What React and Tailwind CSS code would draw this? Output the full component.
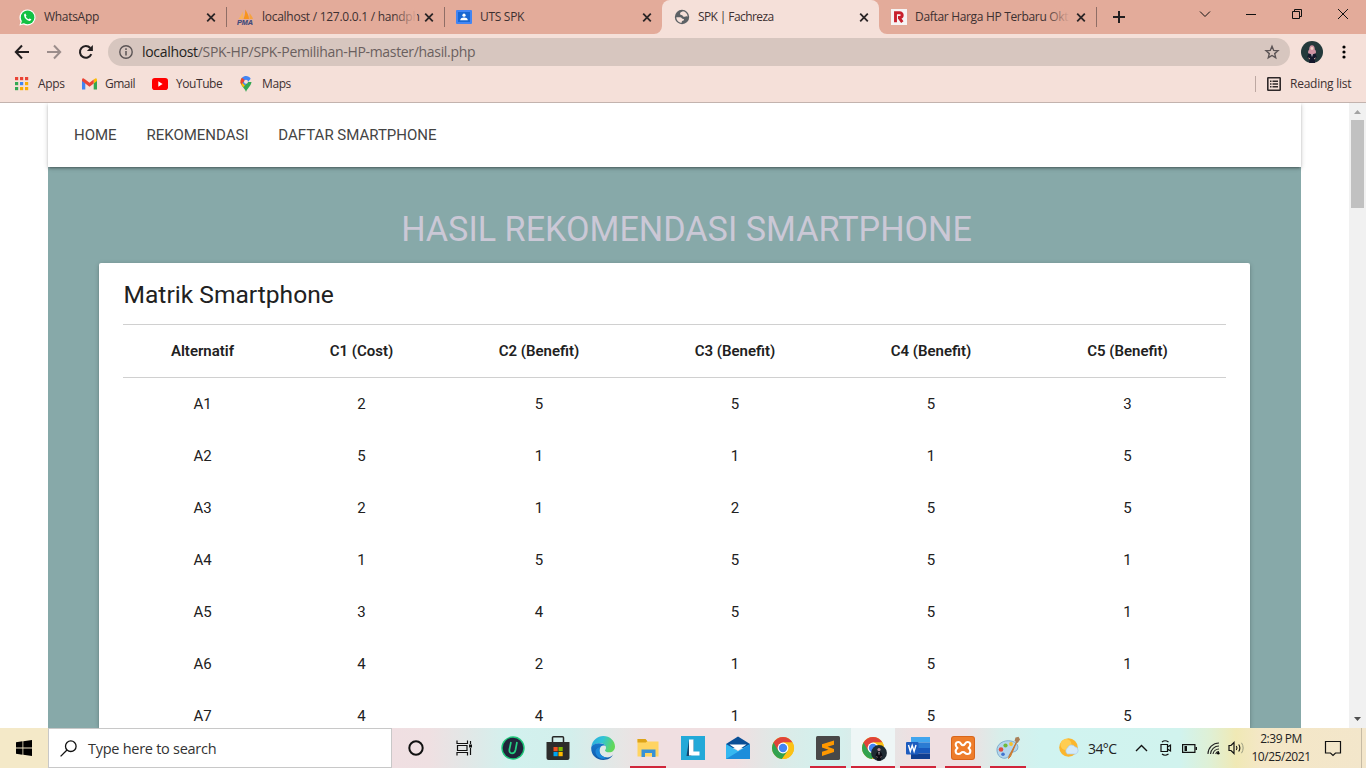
import React from "react";

const ui = "font-['Open_Sans','Noto_Sans',sans-serif]";

function CloseX() {
  return (
    <svg width="16" height="16" viewBox="0 0 16 16" className="shrink-0">
      <path d="M4.2 4.7 L11.8 12.3 M11.8 4.7 L4.2 12.3" stroke="#2b2526" strokeWidth="1.8" fill="none" />
    </svg>
  );
}

function Tab({ icon, title, fade, sep, active, tracking, width = "w-[218px]" }) {
  return (
    <div className={"relative flex h-[34px] shrink-0 items-center pl-[11px] pr-[7px] " + width + (active ? " rounded-t-lg bg-[#f5e0d9]" : "")}>
      {active && (
        <>
          <svg className="absolute -left-2 bottom-0" width="8" height="8"><path d="M8 0 V8 H0 A8 8 0 0 0 8 0Z" fill="#f5e0d9" /></svg>
          <svg className="absolute -right-2 bottom-0" width="8" height="8"><path d="M0 0 V8 H8 A8 8 0 0 1 0 0Z" fill="#f5e0d9" /></svg>
        </>
      )}
      <div className="flex w-[17px] shrink-0 justify-center">{icon}</div>
      <div className="relative ml-2 w-[155px]">
        <div className={"whitespace-nowrap text-[12px] leading-[18px] text-[#3d3031] " + tracking}>{title}</div>
        {fade && <div className="absolute right-0 top-0 h-full w-6 bg-gradient-to-r from-transparent to-[#e3ab9a]" />}
      </div>
      <div className="ml-auto"><CloseX /></div>
      {sep && <div className="absolute right-[-1px] top-[7px] h-5 w-px bg-[#8f6e66]" />}
    </div>
  );
}

const WhatsAppIcon = (
  <svg width="17" height="17" viewBox="0 0 17 17">
    <path d="M8.6 .4a8 8 0 1 1-4 15L.4 16.6 1.7 12.6A8 8 0 0 1 8.6 .4Z" fill="#fff" />
    <circle cx="8.6" cy="8.4" r="6.8" fill="#12c143" />
    <path d="M2 15 L3 11.5 L5.5 14Z" fill="#12c143" />
    <path d="M6.4 4.6c-.8 0-1.4.8-1.3 1.8.3 2.6 2.6 5 5.2 5.5 1.2.1 2-.7 2-1.6l-1.8-.9-.9.9c-1.3-.5-2.2-1.4-2.8-2.7l.7-.9z" fill="#fff" />
  </svg>
);
const PmaIcon = (
  <svg width="17" height="16" viewBox="0 0 17 16">
    <path d="M1.5 10 C3 8 5 5 5.5 2.5 C6.5 5 6.5 8 6 10Z" fill="#f9b25c" />
    <path d="M6.5 10 C8 6 8.5 3 8 .5 C10 3 12 7 12 10Z" fill="#f8941e" />
    <path d="M12.5 10 L12.5 4 C14 6 15.5 8 16 10Z" fill="#f6a23f" />
    <text x="0" y="15.6" fontFamily="Liberation Sans" fontWeight="bold" fontStyle="italic" fontSize="6.6" textLength="16" lengthAdjust="spacingAndGlyphs" fill="#3e4a7d" stroke="#3e4a7d" strokeWidth=".15">PMA</text>
  </svg>
);
const ClassroomIcon = (
  <svg width="16" height="16" viewBox="0 0 16 16">
    <rect y="1" width="16" height="14" rx="1" fill="#4285f4" />
    <rect x="2" y="3" width="12" height="10" fill="#1967d2" />
    <circle cx="8" cy="6.2" r="1.6" fill="#fff" />
    <path d="M4.2 11.2c0-2 2-2.7 3.8-2.7s3.8.7 3.8 2.7z" fill="#fff" />
  </svg>
);
const GlobeIcon = (
  <svg width="16" height="16" viewBox="0 0 16 16">
    <circle cx="8" cy="8" r="7.2" fill="#5c6165" />
    <path d="M2.300 8.200h3.800c1.700 0 1.700 1.800 3.400 1.800.9 0 .6 1.800-.7 1.800-1 0-1 1.200-1.100 2C4.500 13.600 2.300 11 2.300 8.200zM9 2.300c-1.500.8-3.300 1-2.900 2.900.3 1 2.200.5 2.600 1.600.3 1.300 2 1.300 3 .6.6-.5 1.500-.2 2 .2C13.500 4.800 11.500 2.700 9 2.300z" fill="#f5e0d9" />
  </svg>
);
const RIcon = (
  <svg width="16" height="16" viewBox="0 0 16 16">
    <rect width="16" height="16" fill="#f6f4f4" />
    <path d="M4.500 13.300 V3.700 H8.500 C12.300 3.700 12 8.500 8.500 8.500 H7 M8 8.500 L11.300 13.200" fill="none" stroke="#c8202c" strokeWidth="2.900" />
  </svg>
);

function AppsIcon() {
  const c = ["#ea4335", "#ea4335", "#ea4335", "#34a853", "#4285f4", "#fbad05", "#34a853", "#fbad05", "#fbad05"];
  return (
    <svg width="14" height="14" viewBox="0 0 14 14">
      {c.map((f, i) => <rect key={i} x={(i % 3) * 5} y={Math.floor(i / 3) * 5} width="3.200" height="3.200" fill={f} />)}
    </svg>
  );
}

function Bookmark({ icon, label, cls }) {
  return (
    <div className="flex items-center">
      <div className="flex w-4 justify-center">{icon}</div>
      <div className={"ml-2 whitespace-nowrap text-[12px] leading-4 text-[#3d3031] " + cls}>{label}</div>
    </div>
  );
}

function Browser() {
  return (
    <div className={ui + " flex h-[103px] flex-col border-b border-[#c3b3ae] bg-[#f5e0d9]"}>
      <div className="flex h-[34px] shrink-0 bg-[#e3ab9a] pl-2">
        <Tab icon={WhatsAppIcon} title="WhatsApp" sep tracking="tracking-[-0.3px]" />
        <Tab icon={PmaIcon} title="localhost / 127.0.0.1 / handph" fade sep tracking="tracking-[-0.27px]" />
        <Tab icon={ClassroomIcon} title="UTS SPK" tracking="tracking-[-0.3px]" />
        <Tab icon={GlobeIcon} title="SPK | Fachreza" active width="w-[217px]" tracking="tracking-[-0.6px]" />
        <Tab icon={RIcon} title="Daftar Harga HP Terbaru Okt" fade sep width="w-[217px]" tracking="tracking-[-0.32px]" />
        <div className="flex w-[46px] items-center justify-center">
          <svg width="14" height="14" viewBox="0 0 14 14"><path d="M7 1V13M1 7H13" stroke="#231f20" strokeWidth="2" /></svg>
        </div>
        <div className="ml-auto flex h-7 items-center">
          <div className="flex w-[46px] justify-center"><svg width="12" height="12"><path d="M1 3.500 L6 8.500 L11 3.500" fill="none" stroke="#111" /></svg></div>
          <div className="flex w-[46px] justify-center"><svg width="12" height="12"><path d="M1 6.500H11" stroke="#111" /></svg></div>
          <div className="flex w-[46px] justify-center"><svg width="12" height="12"><path d="M1.500 3.500h7v7h-7zM3.500 3.500v-2h7v7h-2" fill="none" stroke="#111" /></svg></div>
          <div className="flex w-[46px] justify-center"><svg width="12" height="12"><path d="M1 1L11 11M11 1L1 11" stroke="#111" /></svg></div>
        </div>
      </div>
      <div className="flex h-9 shrink-0 items-center pl-[14px]">
        <svg width="16" height="16" viewBox="0 0 16 16"><path d="M15 8H2M8 1.500L1.800 8L8 14.500" fill="none" stroke="#231f20" strokeWidth="2" /></svg>
        <svg className="ml-4" width="16" height="16" viewBox="0 0 16 16"><path d="M1 8H14M8 1.500L14.200 8L8 14.500" fill="none" stroke="#9b8d8b" strokeWidth="2" /></svg>
        <svg className="ml-4" width="16" height="16" viewBox="0 0 16 16"><path d="M13.300 10.200A5.900 5.900 0 1 1 12.300 4" fill="none" stroke="#231f20" strokeWidth="2.100" /><path d="M14.900 1V7H8.900Z" fill="#231f20" /></svg>
        <div className="ml-[14px] flex h-7 w-[1182px] items-center rounded-full bg-[#d7c6bf] pl-[11px] pr-[10px]">
          <svg width="14" height="14" viewBox="0 0 14 14"><circle cx="7" cy="7" r="6.200" fill="none" stroke="#5b5455" strokeWidth="1.400" /><path d="M7 6V10.500M7 3.300V5" stroke="#5b5455" strokeWidth="1.500" /></svg>
          <div className="ml-[9px] whitespace-nowrap text-[14px] leading-5 tracking-[-0.32px] text-[#6a5f5e]"><span className="text-[#231f20]">localhost</span>/SPK-HP/SPK-Pemilihan-HP-master/hasil.php</div>
          <svg className="ml-auto" width="16" height="16" viewBox="0 0 16 16"><path d="M8 2.300L9.700 6.400L14 6.700L10.700 9.600L11.700 13.700L8 11.500L4.300 13.700L5.300 9.600L2 6.700L6.300 6.400Z" fill="none" stroke="#5b5455" strokeWidth="1.400" /></svg>
        </div>
        <svg className="ml-[11px]" width="22" height="22" viewBox="0 0 22 22">
          <circle cx="11" cy="11" r="11" fill="#23393b" />
          <path d="M7.800 12H14.200L15.800 16L14 18.500V22H8.200V18.500L6.200 16Z" fill="#14182c" />
          <path d="M11 4.300C13 4.300 13.800 6 13.800 8.500C15 9.500 15.200 11 14.800 12.300L11 13.500L7.200 12.300C6.800 11 7.300 9.500 8.200 8.500C8.200 6 9 4.300 11 4.300Z" fill="#cf94a4" />
          <circle cx="11" cy="7.500" r="1.400" fill="#f0d2c4" />
          <path d="M10.300 13H11.700L11.300 15.500H10.700Z" fill="#d8cfd8" />
          <path d="M7.500 17L9 18M14.500 17L13 18" stroke="#d9b0a0" strokeWidth="1" />
        </svg>
        <svg className="ml-5 -translate-x-px" width="4" height="14" viewBox="0 0 4 14"><circle cx="2" cy="2" r="1.600" /><circle cx="2" cy="7" r="1.600" /><circle cx="2" cy="12" r="1.600" /></svg>
      </div>
      <div className="flex h-7 items-center pl-[14px] pr-[14px]">
        <Bookmark cls="w-[43px] tracking-[-0.3px]" label="Apps" icon={<AppsIcon />} />
        <Bookmark cls="w-[47px] tracking-[-0.5px]" label="Gmail" icon={
          <svg width="15" height="12" viewBox="0 0 15 12"><path d="M0 2V11.500H3.300V5Z" fill="#4285f4" /><path d="M15 2V11.500H11.700V5Z" fill="#34a853" /><path d="M11.700 1.500V5.500L15 3V1.700Q14.500 -.500 12.500 .900Z" fill="#fbbc04" /><path d="M3.300 1.500L7.500 4.700L11.700 1.500V5.500L7.500 8.700L3.300 5.500L0 3V1.700Q.500 -.500 2.500 .900Z" fill="#ea4335" /></svg>} />
        <Bookmark cls="w-[62px] tracking-[-0.43px]" label="YouTube" icon={
          <svg width="16" height="12" viewBox="0 0 16 12"><rect width="16" height="12" rx="2.800" fill="#f00" /><path d="M6.300 3.300L10.600 6L6.300 8.700Z" fill="#fff" /></svg>} />
        <Bookmark cls="tracking-[-0.4px]" label="Maps" icon={
          <svg width="12" height="16" viewBox="0 0 12 16">
            <path d="M6 16C5.500 13 1 10.500 .500 6H11.500C11 10.500 6.500 13 6 16Z" fill="#34a853" />
            <path d="M.500 6C.400 4 1 2.600 2 1.700L7.500 6.300L3.300 11.300C1.800 9.500 .600 8 .500 6Z" fill="#fbbc04" />
            <path d="M2 1.700C4.500-.800 9-.500 10.700 2.700L5 9.500L.700 5Z" fill="#4285f4" />
            <path d="M2 1.700L5 4.200L1.200 8.500C.100 6 .400 3.500 2 1.700Z" fill="#ea4335" />
            <circle cx="6" cy="5.700" r="2" fill="#f5e0d9" />
          </svg>} />
        <div className="ml-auto h-4 w-px bg-[#bda8a2]" />
        <svg className="ml-[11px]" width="14" height="14" viewBox="0 0 14 14"><rect x=".800" y=".800" width="12.400" height="12.400" rx=".500" fill="none" stroke="#2e2829" strokeWidth="1.600" /><path d="M3 4.300H4.500M3 7H4.500M3 9.700H4.500M5.500 4.300H11M5.500 7H11M5.500 9.700H11" stroke="#2e2829" strokeWidth="1.500" /></svg>
        <div className="ml-[9px] w-[62px] whitespace-nowrap text-[12px] tracking-[-0.25px] text-[#3d3031]">Reading list</div>
      </div>
    </div>
  );
}

const rows = [
  ["A1", 2, 5, 5, 5, 3],
  ["A2", 5, 1, 1, 1, 5],
  ["A3", 2, 1, 2, 5, 5],
  ["A4", 1, 5, 5, 5, 1],
  ["A5", 3, 4, 5, 5, 1],
  ["A6", 4, 2, 1, 5, 1],
  ["A7", 4, 4, 1, 5, 5],
];
const heads = ["Alternatif", "C1 (Cost)", "C2 (Benefit)", "C3 (Benefit)", "C4 (Benefit)", "C5 (Benefit)"];
const grid = "grid grid-cols-[159px_159px_196px_196px_196px_197px] items-center text-center";

function Page() {
  return (
    <div className="flex h-[625px] bg-white font-[Roboto,sans-serif] text-[#212121]">
      <div className="flex-1 overflow-hidden pl-12 pr-12">
        <div className="relative flex h-16 items-center gap-[29.800px] bg-white pl-[26px] text-[15px] text-[#444] shadow-[0_2px_2px_0_rgba(0,0,0,0.14),0_3px_1px_-2px_rgba(0,0,0,0.12),0_1px_5px_0_rgba(0,0,0,0.2)]">
          <span>HOME</span>
          <span>REKOMENDASI</span>
          <span>DAFTAR SMARTPHONE</span>
        </div>
        <div className="h-[561px] bg-[#87a9a9] px-[51px] pt-[42px]">
          <h1 className="h-[54px] pl-6 text-center text-[34.200px] leading-[40px] text-[#cbc8d6]">HASIL REKOMENDASI SMARTPHONE</h1>
          <div className="h-[465px] overflow-hidden rounded-t-[2px] bg-white px-6 shadow-[0_2px_2px_0_rgba(0,0,0,0.14),0_3px_1px_-2px_rgba(0,0,0,0.12),0_1px_5px_0_rgba(0,0,0,0.2)]">
            <h2 className="h-[61px] pl-[0.5px] pt-4 text-[24.600px] leading-8">Matrik Smartphone</h2>
            <div className={grid + " h-[54px] border-y border-[#d0d0d0] text-[15px] font-semibold"}>
              {heads.map((h) => <div key={h}>{h}</div>)}
            </div>
            {rows.map((r) => (
              <div key={r[0]} className={grid + " h-[52px] text-[15px]"}>
                {r.map((v, i) => <div key={i}>{v}</div>)}
              </div>
            ))}
          </div>
        </div>
      </div>
      <div className="flex w-[17px] flex-col items-center bg-[#f1f1f1]">
        <svg width="17" height="17"><path d="M5 11L8.500 7L12 11Z" fill="#a3a3a3" /></svg>
        <div className="h-[88px] w-[13px] bg-[#c1c1c1]" />
        <svg className="mt-auto" width="17" height="17"><path d="M5 6L8.500 10L12 6Z" fill="#505050" /></svg>
      </div>
    </div>
  );
}

function App45({ children, open }) {
  return (
    <div className="flex h-10 w-[45px] flex-col items-center">
      <div className="flex h-[38px] items-center pt-[2px]">{children}</div>
      {open && <div className="h-[2px] w-9 bg-[#d0253a]" />}
    </div>
  );
}

function Chrome() {
  return (
    <svg width="24" height="24" viewBox="0 0 24 24">
      <circle cx="12" cy="12" r="11" fill="#fbc116" />
      <path d="M12 12L2.500 6.500A11 11 0 0 0 11 23L16.800 14.700Z" fill="#31a24f" />
      <path d="M2.500 6.500A11 11 0 0 1 21.500 6.500H12L7.200 14.700Z" fill="#e0443a" />
      <path d="M21.500 6.500H12L16.800 14.700L11 23A11 11 0 0 0 21.500 6.500Z" fill="#fbc116" />
      <circle cx="12" cy="12" r="5.400" fill="#fff" />
      <circle cx="12" cy="12" r="4.200" fill="#4285f4" />
    </svg>
  );
}

function Taskbar() {
  return (
    <div className={ui + " flex h-10 items-center bg-[linear-gradient(90deg,#f4e9c8_0px,#f4e9c8_48px,#f0dfe2_392px,#efe0e2_430px,#dfe9e8_475px,#d2f1ee_510px,#d3efec_570px,#e6e6e5_620px,#f0dfe1_650px,#f0dfe1_735px,#dbebe8_785px,#d2f1ee_830px,#e2e7e6_880px,#efdfe1_915px,#efdfe1_965px,#d8eeea_1000px,#d0f3f0_1040px,#d1f3ee_1180px,#dff0d5_1210px,#f0e9b5_1236px,#f4e7c6_1260px,#f3e6cb_1366px)]"}>
      <div className="flex w-12 justify-center">
        <svg width="16" height="16" viewBox="0 0 16 16"><path d="M0 2.200L6.500 1.300V7.600H0ZM7.300 1.200L16 0V7.600H7.300ZM0 8.400H6.500V14.700L0 13.800ZM7.300 8.400H16V16L7.300 14.800Z" fill="#000" /></svg>
      </div>
      <div className="flex h-10 w-[344px] items-center border border-[#c8c8c8] bg-white pl-[11px]">
        <svg width="17" height="17" viewBox="0 0 17 17"><circle cx="10.800" cy="6.200" r="5.300" fill="none" stroke="#111" strokeWidth="1.300" /><path d="M7 10L.600 16.400" stroke="#111" strokeWidth="1.300" /></svg>
        <div className="ml-[11px] whitespace-nowrap pt-px text-[14.500px] tracking-[-0.27px] text-[#333]">Type here to search</div>
      </div>
      <div className="flex w-12 justify-center"><svg width="16" height="16"><circle cx="8" cy="8" r="6.700" fill="none" stroke="#111" strokeWidth="2" /></svg></div>
      <div className="flex w-12 justify-center">
        <svg width="17" height="16" viewBox="0 0 17 16"><path d="M1 .500V3.500H11.500V.500M1 15.500V12.500H11.500V15.500M1.500 5.500H11V10.500H1.500ZM14.500 1V4M14.500 8V15" fill="none" stroke="#111" strokeWidth="1.200" /><rect x="13" y="4.500" width="3" height="3" fill="#111" /></svg>
      </div>
      <div className="w-[2.5px]" />
      <App45>
        <svg width="24" height="24" viewBox="0 0 24 24"><circle cx="12" cy="12" r="11.700" fill="#1fc77a" /><circle cx="12" cy="12" r="10.300" fill="#20243a" /><path d="M10 6L8.400 13.500Q8 17.300 11 17.300Q13.800 17.300 14.500 14L16 6" fill="none" stroke="#25cf82" strokeWidth="1.700" /></svg>
      </App45>
      <App45>
        <svg width="24" height="24" viewBox="0 0 24 24"><path d="M6.500 6V1.700Q6.500 .800 7.500 .800H16.500Q17.500 .800 17.500 1.700V6" fill="none" stroke="#262626" strokeWidth="1.500" /><path d="M.500 6H23.500V22Q23.500 24 21.500 24H2.500Q.500 24 .500 22Z" fill="#2d2c2b" /><rect x="7.500" y="11" width="4.200" height="4.200" fill="#f25022" /><rect x="12.500" y="11" width="4.200" height="4.200" fill="#7fba00" /><rect x="7.500" y="16" width="4.200" height="4.200" fill="#00a4ef" /><rect x="12.500" y="16" width="4.200" height="4.200" fill="#ffb900" /></svg>
      </App45>
      <App45>
        <svg width="24" height="24" viewBox="0 0 24 24">
          <defs>
            <linearGradient id="eg" x1="0" x2="1" y1="0" y2=".3"><stop offset="0" stopColor="#2aa9de" /><stop offset=".5" stopColor="#31c4d6" /><stop offset="1" stopColor="#62d85a" /></linearGradient>
            <linearGradient id="eb" x1="0" x2="0" y1="0" y2="1"><stop offset="0" stopColor="#1679cd" /><stop offset="1" stopColor="#1259a8" /></linearGradient>
          </defs>
          <path d="M.300 11C1.300 4 6.500 0 12.300 0C19 0 24 5 24 10.500C24 14 21.500 16.300 18.300 16.300C15.500 16.300 14 15.300 14 14.500C14 13.900 15 13.300 15 11.700C15 9 12.500 7.200 9 7.200C4.500 7.200 1.500 9 .300 11Z" fill="url(#eg)" />
          <path d="M.300 11C1.700 8.400 4.500 7.200 8 7.200C11.500 7.200 14 8.500 14.800 10C11 8.500 8.300 11.300 8.300 14.500C8.300 18.500 12 21.500 16 21.500C19 21.500 21.200 20 22.300 18.300C20.500 22 16.800 24 12.300 24C4.500 24-.600 18 .300 11Z" fill="url(#eb)" />
          <path d="M9.500 11.200C7 15 9.500 21.300 16 21.500C12 24.500 5 22 4.500 16C4.300 13.500 6.500 11 9.500 11.200Z" fill="#1b88da" />
        </svg>
      </App45>
      <App45 open>
        <svg width="24" height="24" viewBox="0 0 24 24"><path d="M1.500 3H9.500L11.500 5.500H22.500V20.500H1.500Z" fill="#ffd461" /><path d="M1.500 3H9.500L11.300 5.200L9.800 6.500H1.500Z" fill="#dda318" /><path d="M5.500 21V13.500H19.500V21H16V17H9V21Z" fill="#3891d5" /></svg>
      </App45>
      <App45>
        <svg width="24" height="24" viewBox="0 0 24 24"><rect width="24" height="24" fill="#23a9d8" /><path d="M8 4L5.500 20H10L12.500 16V4Z" fill="#13456e" /><path d="M8 3.500H12.500V15.500H18.500V19.500H8Z" fill="#fff" /></svg>
      </App45>
      <App45>
        <svg width="24" height="24" viewBox="0 0 24 24"><path d="M0 8L12 .500L24 8V12H0Z" fill="#0a4f96" /><path d="M0 8L12 15L24 8V23H0Z" fill="#35b8f1" /><path d="M24 8.500V23H0Z" fill="#1c8ddb" /><path d="M3.500 8.500H20.500L12 14.300Z" fill="#fff" /></svg>
      </App45>
      <App45><Chrome /></App45>
      <App45 open>
        <svg width="24" height="24" viewBox="0 0 24 24"><rect width="24" height="24" rx="1.500" fill="#484848" /><path d="M6 8.300L18 4.500V8.700L11.500 10.800L18 12.900V16L6 20V15.800L12.500 13.700L6 11.500Z" fill="#ff9800" /></svg>
      </App45>
      <div className="flex h-10 w-[45px] justify-center">
        <div className="flex w-11 flex-col items-center bg-[#eef6f6]">
          <div className="flex h-[38px] items-center pt-[2px]">
            <div className="relative">
              <Chrome />
              <svg className="absolute left-[10px] top-[9px]" width="16" height="16" viewBox="0 0 16 16"><circle cx="8" cy="8" r="7.900" fill="#1f2b33" /><path d="M5.500 8L7 6.500H9L10.500 8L11.500 11L10 12V15.500H6V12L4.500 11Z" fill="#0b0b14" /><circle cx="8" cy="4.600" r="1.600" fill="#b98d9c" /><path d="M7.400 7H8.600L8.200 10H7.800Z" fill="#c9c4ca" /><path d="M5.500 11.500L6.700 12.300M10.500 11.500L9.300 12.300" stroke="#b98d8c" strokeWidth=".800" /></svg>
            </div>
          </div>
          <div className="h-[2px] w-full bg-[#d0253a]" />
        </div>
      </div>
      <App45 open>
        <svg width="24" height="24" viewBox="0 0 24 24"><rect x="5" y="1" width="19" height="5.500" fill="#41a5ee" /><rect x="5" y="6.500" width="19" height="5.500" fill="#2b7cd3" /><rect x="5" y="12" width="19" height="5.500" fill="#185abd" /><rect x="5" y="17.500" width="19" height="5.500" fill="#103f91" /><rect y="6" width="12.500" height="12.500" rx="1" fill="#1d5cbf" /><path d="M2.500 9L4.300 15.300L6.200 9.500L8.100 15.300L10 9" fill="none" stroke="#fff" strokeWidth="1.400" /></svg>
      </App45>
      <App45 open>
        <svg width="24" height="24" viewBox="0 0 24 24"><rect width="24" height="24" rx="3" fill="#d9651a" /><rect x="1" y="1" width="22" height="22" rx="2" fill="#ee7d2b" /><path d="M7.500 6C4.200 6 3.800 9.500 6.300 12C3.800 14.500 4.200 18 7.500 18C10.300 18 9.500 16 12 16C14.500 16 13.700 18 16.500 18C19.800 18 20.200 14.500 17.700 12C20.200 9.500 19.800 6 16.500 6C14 6 14 9.300 12 9.300C10 9.300 10 6 7.500 6Z" fill="none" stroke="#fff" strokeWidth="2.100" /></svg>
      </App45>
      <App45 open>
        <svg width="24" height="24" viewBox="0 0 24 24"><path d="M1 15C0 8 8 3.500 15 5C20 6 23 9 21.500 13C20 17 15 15 14 18C13 21 10 23 6.500 22C3 21 1.500 18.500 1 15Z" fill="#b5d6ec" stroke="#6b9fc6" strokeWidth=".800" /><circle cx="5" cy="13.500" r="2.300" fill="#e04c3f" /><circle cx="9.500" cy="9.500" r="2.100" fill="#6fbb3a" /><circle cx="15" cy="8" r="1.900" fill="#f5c12d" /><circle cx="7" cy="18.300" r="1.800" fill="#4173cf" /><path d="M21.500 4L14.500 20.500L12.500 22.500L13.300 19.500Z" fill="#dc8a32" stroke="#c46d23" strokeWidth=".800" /><path d="M18.500 5L19.500 1.500L22.500 .800L24 3.500L21.700 7Z" fill="#a98058" /></svg>
      </App45>
      <div className="ml-auto flex h-10 w-[308px] items-center">
        <svg width="22" height="22" viewBox="0 0 22 22"><circle cx="10.500" cy="10.500" r="9.300" fill="#fbb62d" /><circle cx="8" cy="7.500" r="5.500" fill="#ffcd51" /><path d="M9.500 17A3.500 3.500 0 0 1 9.500 11A4.200 4.200 0 0 1 17 9.800A3.700 3.700 0 0 1 17.500 17Z" fill="#d4eaf9" stroke="#a7cdee" strokeWidth=".700" /></svg>
        <div className="ml-2 w-[47px] whitespace-nowrap text-[14px] tracking-[-0.600px] text-[#222]">34°C</div>
        <svg width="13" height="8" viewBox="0 0 13 8"><path d="M1 7L6.500 1.500L12 7" fill="none" stroke="#111" strokeWidth="1.400" /></svg>
        <svg className="ml-3" width="12" height="16" viewBox="0 0 12 16"><path d="M1 4.500H7.500V11.500H1ZM7.500 7L10.500 5V11L7.500 9M2 2Q5 -.500 8.500 2M2 14Q5 16.500 8.500 14" fill="none" stroke="#111" strokeWidth="1.200" /></svg>
        <svg className="ml-[10px]" width="15" height="9" viewBox="0 0 15 9"><path d="M.600 .600H12.900V8.400H.600Z" fill="none" stroke="#111" strokeWidth="1.200" /><path d="M2.500 2H5V7H2.500ZM13.500 3H15V6H13.500Z" fill="#111" /></svg>
        <svg className="ml-[10px]" width="13" height="14" viewBox="0 0 13 14"><path d="M1 13A11 11 0 0 1 12 2M3.500 13A8.500 8.500 0 0 1 12 5M6 13A6 6 0 0 1 12 8M8.700 13A3.500 3.500 0 0 1 12 10.500" fill="none" stroke="#222" strokeWidth="1.100" /><circle cx="11.300" cy="12.300" r="1.300" /></svg>
        <svg className="ml-2" width="17" height="14" viewBox="0 0 17 14"><path d="M1 4.500H3L6 1.500V12.500L3 9.500H1Z" fill="none" stroke="#111" strokeWidth="1.200" /><path d="M8.300 5Q9.700 7 8.300 9M10.700 3.500Q13 7 10.700 10.500" fill="none" stroke="#111" strokeWidth="1.100" /><path d="M13.500 1.800Q16.800 7 13.500 12.200" fill="none" stroke="#999b80" strokeWidth="1" /></svg>
        <div className="ml-[5px] w-[62px] whitespace-nowrap text-center text-[12px] leading-[18px] tracking-[-0.450px] text-[#222]">
          <div>2:39 PM</div>
          <div>10/25/2021</div>
        </div>
        <svg className="ml-[12px]" width="18" height="18" viewBox="0 0 18 18"><path d="M1.500 2.500H16.500V14H11.500L9 16.500L6.500 14H1.500Z" fill="none" stroke="#111" strokeWidth="1.200" /></svg>
        <div className="ml-auto mr-1 h-10 w-px bg-[#c6bba5]" />
      </div>
    </div>
  );
}

export default function App() {
  return (
    <div className="flex h-[768px] w-[1366px] flex-col overflow-hidden">
      <Browser />
      <Page />
      <Taskbar />
    </div>
  );
}
